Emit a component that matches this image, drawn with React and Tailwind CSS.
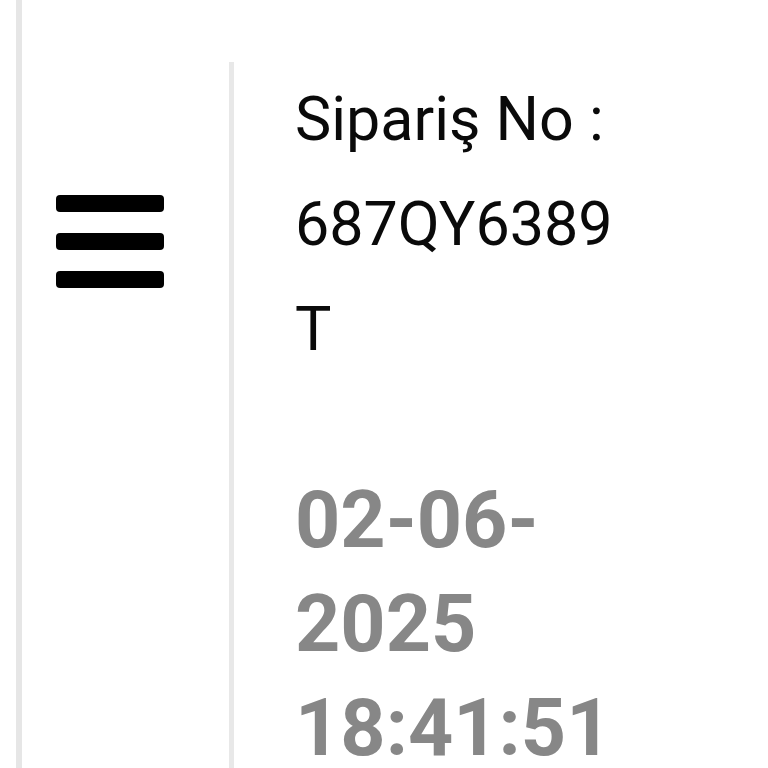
const HamburgerIcon = () => (
  <div className="flex flex-col gap-[21px]">
    <span className="block w-[108px] h-[17px] rounded-[4px] bg-black" />
    <span className="block w-[108px] h-[17px] rounded-[4px] bg-black" />
    <span className="block w-[108px] h-[17px] rounded-[4px] bg-black" />
  </div>
);

const OrderRow = ({ orderNo, dateLines }) => {
  return (
    <div className="flex flex-1">
      <div className="w-[5px] mt-[62px] bg-[#e8e8e8]" />
      <div className="pl-[61px] pt-[67px] font-['Roboto',sans-serif]">
        <div className="text-[61px] leading-[105px] text-[#0a0a0a]">
          <div>Sipariş No :</div>
          {orderNo.map((line) => (
            <div key={line}>{line}</div>
          ))}
        </div>
        <div className="mt-[86px] text-[79px] leading-[104px] font-bold text-[#878787]">
          {dateLines.map((line) => (
            <div key={line}>{line}</div>
          ))}
        </div>
      </div>
    </div>
  );
};

export default function App() {
  return (
    <div className="flex h-screen w-full bg-white overflow-hidden">
      <div className="ml-[16px] w-[6px] bg-[#e6e6e6]" />
      <div className="w-[207px] pl-[34px] pt-[195px]">
        <HamburgerIcon />
      </div>
      <OrderRow orderNo={["687QY6389", "T"]} dateLines={["02-06-", "2025", "18:41:51"]} />
    </div>
  );
}
